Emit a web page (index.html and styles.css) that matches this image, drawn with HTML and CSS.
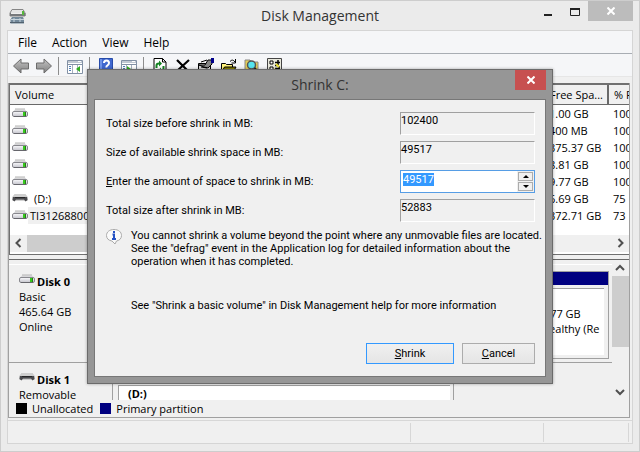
FILE: index.html
```
<!DOCTYPE html>
<html lang="en">
<head>
<meta charset="utf-8">
<title>Disk Management</title>
<link rel="stylesheet" href="styles.css">
</head>
<body>
<svg class="defs" width="0" height="0" aria-hidden="true">
  <defs>
    <linearGradient id="silver" x1="0" y1="0" x2="0" y2="1"><stop offset="0" stop-color="#fafafc"/><stop offset="1" stop-color="#c4c4cc"/></linearGradient>
    <linearGradient id="arrow" x1="0" y1="0" x2="0" y2="1"><stop offset="0" stop-color="#c4c4c4"/><stop offset="1" stop-color="#808080"/></linearGradient>
    <symbol id="drive" viewBox="0 0 16 10">
      <path d="M3 1.500h10l2.500 3H.5z" fill="#d6d6d8"/><path d="M3 1h10" stroke="#b4b4b4"/>
      <rect x=".5" y="3.5" width="15" height="5" rx="1.5" fill="url(#silver)" stroke="#88888e"/>
      <path d="M2 8.500h12" stroke="#66666c"/><rect x="11" y="4" width="2" height="4" fill="#35c81c"/><path d="M13.500 4v4" stroke="#287818"/>
    </symbol>
    <symbol id="removable" viewBox="0 0 16 10">
      <path d="M3 1h10l2.500 3v3.500H.5V4z" fill="#a8a8a8"/><path d="M3 1h10l2.500 3H.5z" fill="#cfcfcf"/>
      <path d="M1 4h14l.5 3-2 1.500-1.500-2H4L2.500 8.500.5 7z" fill="#4a4a4e"/><path d="M3 4.500h10" stroke="#262628"/>
    </symbol>
    <symbol id="console" viewBox="0 0 16 14">
      <path d="M.5.5h15v13H.5z" fill="#fff" stroke="#8291a5"/><path d="M1 2h14M1 4.500h14" stroke="#8291a5"/><path d="M11 1.500h3" stroke="#fff"/>
      <path d="M5.500 5v8M10.500 5v8" stroke="#a5b0be"/><path d="M2 6.500h2M2 8.500h2M2 10.500h2" stroke="#5080b8"/>
    </symbol>
  </defs>
</svg>
<div class="window">
  <header class="titlebar">
    <svg class="app-icon" width="18" height="16" viewBox="0 0 18 16"><path d="M3 1.500h11l2 3.500v3H1V5z" fill="#e4e4e4" stroke="#858585"/><path d="M1 5h15.500v3H1z" fill="#77797c"/><path d="M2 5.500h11" stroke="#eee"/><path d="M14 3v4" stroke="#55b83c" stroke-width="2"/><path d="M3 9h11l1 2.500v4H1.500v-4z" fill="#73899a"/><path d="M2 11.500h13M5 10v4M11 10v4" stroke="#c7d3dc"/><path d="M1 14.500h14" stroke="#52616e"/></svg>
    <h1>Disk Management</h1>
    <div class="controls">
      <button aria-label="Minimize"><svg width="8" height="12"><path d="M0 10h8" stroke="#222" stroke-width="2"/></svg></button>
      <button aria-label="Maximize"><svg width="10" height="12"><path d="M.5 4v6.500h9V4" fill="none" stroke="#222"/><path d="M0 4h10" stroke="#222" stroke-width="2"/></svg></button>
      <button class="close" aria-label="Close"><svg width="8" height="8"><path d="M.5.5l7 7M7.500.5l-7 7" stroke="#fff" stroke-width="2"/></svg></button>
    </div>
  </header>
  <div class="client">
    <nav class="menu"><button>File</button><button>Action</button><button>View</button><button>Help</button></nav>
    <div class="toolbar">
      <button aria-label="Back"><svg width="16" height="16"><path d="M.5 8L8 1v4h7.500v6H8v4z" fill="url(#arrow)" stroke="#6c6c6c"/></svg></button>
      <button aria-label="Forward"><svg width="16" height="16"><path d="M15.500 8L8 1v4H.5v6H8v4z" fill="url(#arrow)" stroke="#6c6c6c"/></svg></button>
      <i class="sep"></i>
      <button aria-label="Show or hide console tree"><svg width="16" height="16"><use href="#console" y="2" width="16" height="14"/><path d="M13 8v6l-4-3z" fill="#31ad20"/></svg></button>
      <i class="sep"></i>
      <button aria-label="Help"><svg width="14" height="16"><path d="M.5.500h13v15H.5z" fill="#4068cf" stroke="#274caa"/><path d="M2 1v14" stroke="#6f93e8" stroke-width="2"/><path d="M5 5q0-2.500 2.500-2.500T10 5q0 1.500-1.500 2.300T7.500 9.500M7.500 11v2" fill="none" stroke="#fff" stroke-width="2"/></svg></button>
      <button aria-label="Show or hide action pane"><svg width="16" height="16"><use href="#console" y="2" width="16" height="14"/><path d="M6 8v6l4-3z" fill="#31ad20"/></svg></button>
      <i class="sep"></i>
      <button aria-label="Refresh"><svg width="14" height="16"><path d="M1 .5h8.500l3.500 3.500v11.500H1z" fill="#fff" stroke="#000"/><path d="M9.500.5V4H13" fill="none" stroke="#000"/><path d="M3.500 10V7.500q0-2 2.500-2M10.500 8v2.500q0 2-2.500 2" fill="none" stroke="#138322" stroke-width="2"/><path d="M6 2.500v6l3-3zM8 9.500v6l-3-3z" fill="#138322"/></svg></button>
      <button aria-label="Delete"><svg width="14" height="16"><path d="M1 2l11 11M13 2L1.500 12.500" stroke="#000" stroke-width="2.200"/></svg></button>
      <button aria-label="Properties"><svg width="16" height="16"><path d="M.5 5.500h12v9H.5z" fill="#d8d8d8" stroke="#000"/><path d="M1 7h6L10 2h4v4l-4 4-4-1z" fill="#888" stroke="#000"/><path d="M3 4l6-2M3 9l6 1" stroke="#000"/><path d="M14.500 0v5" stroke="#00008b" stroke-width="3"/></svg></button>
      <button aria-label="Open"><svg width="16" height="16"><path d="M.5 14.500v-9h4l1 1h6v3" fill="#fff27a" stroke="#000"/><path d="M.5 14.500l3-5.500H15l-3 5.500z" fill="#8c8400" stroke="#000"/><path d="M9 3.500q2.500-3 5 .5M14.500 1v4h-4" fill="none" stroke="#000"/></svg></button>
      <button aria-label="Find"><svg width="16" height="16"><path d="M1 2h5l1 2h7v10H1z" fill="#e3cd57" stroke="#888"/><circle cx="7.500" cy="7" r="4" fill="#55e5ef" stroke="#555" stroke-width="1.500"/><path d="M10.500 10l4 4.500" stroke="#222" stroke-width="2"/></svg></button>
      <button aria-label="Settings"><svg width="16" height="16"><path d="M.5.5h14v15H.5z" fill="#e8e8dc" stroke="#444"/><path d="M3 3h3v3H3zM3 9h3v3H3z" fill="#fff" stroke="#000"/><path d="M8 4.500h5M8 7.500h3M11 2v5M8 10.500h5M12 8v5" stroke="#000" stroke-width="1.500"/><path d="M9 6l3 3M7 11l3 2" stroke="#e6dc35" stroke-width="2"/></svg></button>
    </div>
    <main class="workspace">
      <section class="volumes">
        <table>
          <colgroup><col><col class="free"><col class="pct"></colgroup>
          <thead><tr><th>Volume</th><th>Free Spa...</th><th>% F</th></tr></thead>
          <tbody>
            <tr><td><svg><use href="#drive"/></svg></td><td>1.00 GB</td><td>100</td></tr>
            <tr><td><svg><use href="#drive"/></svg></td><td>400 MB</td><td>100</td></tr>
            <tr><td><svg><use href="#drive"/></svg></td><td>375.37 GB</td><td>100</td></tr>
            <tr><td><svg><use href="#drive"/></svg></td><td>8.81 GB</td><td>100</td></tr>
            <tr><td><svg><use href="#drive"/></svg></td><td>9.77 GB</td><td>100</td></tr>
            <tr><td><svg><use href="#removable"/></svg><span class="letter">(D:)</span></td><td>6.69 GB</td><td>75</td></tr>
            <tr><td><svg><use href="#drive"/></svg><span class="selected">TI31268800</span></td><td>372.71 GB</td><td>73</td></tr>
          </tbody>
        </table>
        <div class="hscroll"><svg width="17" height="16"><path d="M10.500 4L6.500 8l4 4" fill="none" stroke="#505050" stroke-width="2"/></svg><i></i><svg width="17" height="16"><path d="M6.500 4l4 4-4 4" fill="none" stroke="#505050" stroke-width="2"/></svg></div>
      </section>
      <section class="disks">
        <div class="disk-list">
          <article class="disk first">
            <div class="disk-info"><h2><svg><use href="#drive"/></svg>Disk 0</h2><p>Basic</p><p>465.64 GB</p><p>Online</p></div>
            <div class="partitions"><div class="partition"><i class="strip"></i><div class="cell"><p>9.77 GB</p><p>Healthy (Re</p></div></div></div>
          </article>
          <article class="disk second">
            <div class="disk-info"><h2><svg><use href="#removable"/></svg>Disk 1</h2><p>Removable</p></div>
            <div class="media"><b>(D:)</b></div>
            <div class="blank"></div>
          </article>
        </div>
        <div class="vscroll"><svg width="16" height="16"><path d="M4 10l4-4 4 4" fill="none" stroke="#505050" stroke-width="2"/></svg><i></i><svg width="16" height="16"><path d="M4 6l4 4 4-4" fill="none" stroke="#505050" stroke-width="2"/></svg></div>
      </section>
      <div class="legend"><i class="swatch black"></i><span>Unallocated</span><i class="swatch"></i><span>Primary partition</span></div>
    </main>
    <footer class="status"><i></i><i></i><i></i></footer>
  </div>
</div>

<form class="dialog" role="dialog" aria-labelledby="dialog-title">
  <header><h2 id="dialog-title">Shrink C:</h2><button type="button" class="dialog-close" aria-label="Close"><svg width="8" height="8"><path d="M.5.5l7 7M7.500.5l-7 7" stroke="#fff" stroke-width="2"/></svg></button></header>
  <div class="dialog-body">
    <div class="fields">
      <label for="before">Total size before shrink in MB:</label><output id="before">102400</output>
      <label for="available">Size of available shrink space in MB:</label><output id="available">49517</output>
      <label for="amount"><u>E</u>nter the amount of space to shrink in MB:</label>
      <div class="spin"><input id="amount" type="text" value="49517"><div class="steps"><button type="button" aria-label="Increase"><svg width="6" height="3"><path d="M0 3l3-3 3 3z"/></svg></button><button type="button" aria-label="Decrease"><svg width="6" height="3"><path d="M0 0h6L3 3z"/></svg></button></div></div>
      <label for="after">Total size after shrink in MB:</label><output id="after">52883</output>
    </div>
    <div class="note">
      <svg width="16" height="16"><path d="M8 .5c4.500 0 7.500 2.500 7.500 6 0 3-2 5-5 5.500L9 15l-3-3C2.500 11.500.5 9.500.5 6.500c0-3.500 3-6 7.500-6z" fill="#fafafa" stroke="#aaa"/><path d="M8 2v2M6.500 5.500H8V10M6 10h4" fill="none" stroke="#2452c4" stroke-width="2"/></svg>
      <p>You cannot shrink a volume beyond the point where any unmovable files are located.<br>See the "defrag" event in the Application log for detailed information about the<br>operation when it has completed.</p>
    </div>
    <p class="hint">See "Shrink a basic volume" in Disk Management help for more information</p>
    <div class="actions"><button type="submit" class="default"><span><u>S</u>hrink</span></button><button type="button"><span><u>C</u>ancel</span></button></div>
  </div>
</form>
<script src="script.js"></script>
</body>
</html>
```
FILE: styles.css
```
* { box-sizing: border-box; }
body { margin: 0; min-height: 100vh; display: flex; position: relative; overflow: hidden; background: #ebebeb; color: #000; font: 11px/15px "Open Sans", "Noto Sans", sans-serif; }
h1, h2, p { margin: 0; font-size: inherit; }
button { margin: 0; padding: 0; border: 0; background: none; font: inherit; color: inherit; display: flex; align-items: center; justify-content: center; }
svg { flex: none; }
.defs { position: absolute; }
.window { flex: 1; min-width: 0; display: flex; flex-direction: column; border: 1px solid #cdcdcd; padding: 0 6px 7px; }
.titlebar { height: 29px; display: grid; grid-template-columns: 1fr auto 1fr; }
.titlebar h1 { font-size: 14px; font-weight: 400; line-height: 29px; color: #333; }
.app-icon { margin: 7px 0 0 2px; }
.controls { display: flex; justify-content: flex-end; align-items: flex-start; }
.controls button { width: 27px; height: 20px; }
.controls .close { width: 45px; background: #bcbcbc; }
.client { flex: 1; display: flex; flex-direction: column; border: 1px solid #d5d5d5; background: #f0f0f0; }
.menu { height: 23px; display: flex; gap: 15px; padding: 0 10px; background: #f5f6f8; border-bottom: 1px solid #a8adb3; font-size: 12px; }
.toolbar { height: 23px; display: flex; align-items: center; padding: 2px 1px 0; background: #f5f6f8; border-bottom: 1px solid #e6e6e6; }
.toolbar button { width: 23px; }
.sep { width: 8px; height: 18px; border-right: 4px solid transparent; background: linear-gradient(#8d8d8d, #8d8d8d) right / 1px 100% no-repeat; }
.workspace { flex: 1; display: flex; flex-direction: column; margin: 6px 2px 2px 0; border: 1px solid #a0a0a0; border-width: 0 1px 1px; }
.volumes { border: 2px solid #707070; border-width: 2px 0 1px 1px; background: #fff; margin-bottom: 4px; }
table { width: 100%; table-layout: fixed; border-collapse: collapse; }
.free { width: 64px; }
.pct { width: 21px; }
th, td { padding: 0 0 0 5px; text-align: left; font-weight: 400; white-space: nowrap; overflow: hidden; }
th { height: 19px; background: #f0f0f0; border-right: 2px solid #696969; border-bottom: 1px solid #696969; }
th:last-child { border-right: 0; }
td { height: 17px; line-height: 17px; }
td:first-child { padding-left: 2px; }
td svg, h2 svg { width: 16px; height: 10px; }
.letter { padding-left: 6px; }
.selected { display: inline-block; padding: 0 2px; background: #f0f0f0; }
.hscroll { height: 17px; margin: 11px 0 2px; display: flex; background: #f0f0f0; }
.hscroll i { flex: 1; margin-right: 60px; background: #cdcdcd; }
.disks { height: 141px; display: flex; overflow: hidden; border-top: 1px solid #696969; }
.disk-list { flex: 1; min-width: 0; padding-top: 4px; }
.disk { display: flex; }
.disk.first { height: 99px; border-top: 1px solid #fff; border-bottom: 1px solid #a0a0a0; }
.disk-info { width: 104px; padding: 9px 0 0 10px; border-right: 1px solid #a0a0a0; }
.disk h2 { display: flex; gap: 2px; font-weight: 700; }
.partitions { flex: 1; display: flex; justify-content: flex-end; padding-right: 3px; }
.partition { width: 90px; display: flex; flex-direction: column; margin-top: 6px; height: 88px; border: 1px solid #a0a0a0; }
.strip { height: 13px; background: #000080; }
.cell { flex: 1; overflow: hidden; margin: 3px 4px 3px 3px; padding: 17px 3px 0 18px; border-top: 1px solid #a0a0a0; background: #fff; white-space: nowrap; }
.cell p { overflow: hidden; }
.disk.second { height: 60px; }
.media { width: 332px; margin: 22px 3px 0 5px; padding: 0 9px; border: 1px solid #a0a0a0; border-right: 0; background: #fff; }
.blank { flex: 1; border-left: 1px solid #a0a0a0; }
.vscroll { width: 17px; display: flex; flex-direction: column; }
.vscroll i { flex: 1; max-height: 71px; background: #cdcdcd; }
.vscroll svg:last-child { margin-top: auto; }
.legend { flex: 1; display: flex; align-items: center; gap: 5px; padding: 0 7px; }
.swatch { width: 11px; height: 11px; background: #000080; }
.swatch.black { background: #000; }
.legend span { margin-right: 2px; }
.status { height: 23px; display: flex; border-top: 1px solid #d7d7d7; padding: 2px 3px 1px 0; }
.status i { border-right: 1px solid #d7d7d7; width: 133px; }
.status i:first-child { flex: 1; }
.status i:last-child { width: 85px; }
.dialog { position: absolute; top: 69px; left: 87px; right: 87px; padding: 0 6px 6px; border: 1px solid #6b6b6b; background: #969696; box-shadow: 0 0 3px #0005; font: 11px/13px "Roboto", "Liberation Sans", sans-serif; }
.dialog header { height: 29px; display: grid; grid-template-columns: 1fr auto 1fr; }
.dialog h2 { grid-column: 2; font: 400 14px/29px "Open Sans", sans-serif; color: #333; }
.dialog-close { width: 31px; height: 20px; justify-self: end; background: #c75050; }
.dialog-body { border: 1px solid #777; background: #f0f0f0; padding: 12px 10px 12px 11px; }
.fields { display: grid; grid-template-columns: 1fr 135px; row-gap: 6px; align-items: center; }
output { height: 23px; border: 1px solid #a0a0a0; border-right-color: #fff; border-bottom-color: #fff; line-height: 15px; }
.spin { display: flex; height: 23px; border: 1px solid #569de5; background: #fff; }
.spin input { flex: 1; min-width: 0; height: 15px; margin: 1px 0 0; padding: 0 0 0 2px; border: 0; outline: 0; background: none; font: inherit; }
.spin input::selection { background: #3399ff; color: #fff; }
.steps { width: 17px; display: grid; gap: 1px; padding: 1px; background: #f0f0f0; }
.steps button { border: 1px solid #acacac; }
.note { display: flex; gap: 9px; margin-top: 7px; }
.note p, .hint { white-space: nowrap; }
.hint { margin: 31px 0 0 25px; }
.actions { display: flex; justify-content: flex-end; gap: 8px; margin-top: 31px; }
.actions button { width: 73px; height: 21px; border: 1px solid #acacac; background: linear-gradient(#f0f0f0, #e5e5e5); }
.actions .default { width: 88px; border-color: #3399ff; }
```
FILE: script.js
```
const amount = document.getElementById("amount");
amount.focus();
amount.select();
```
